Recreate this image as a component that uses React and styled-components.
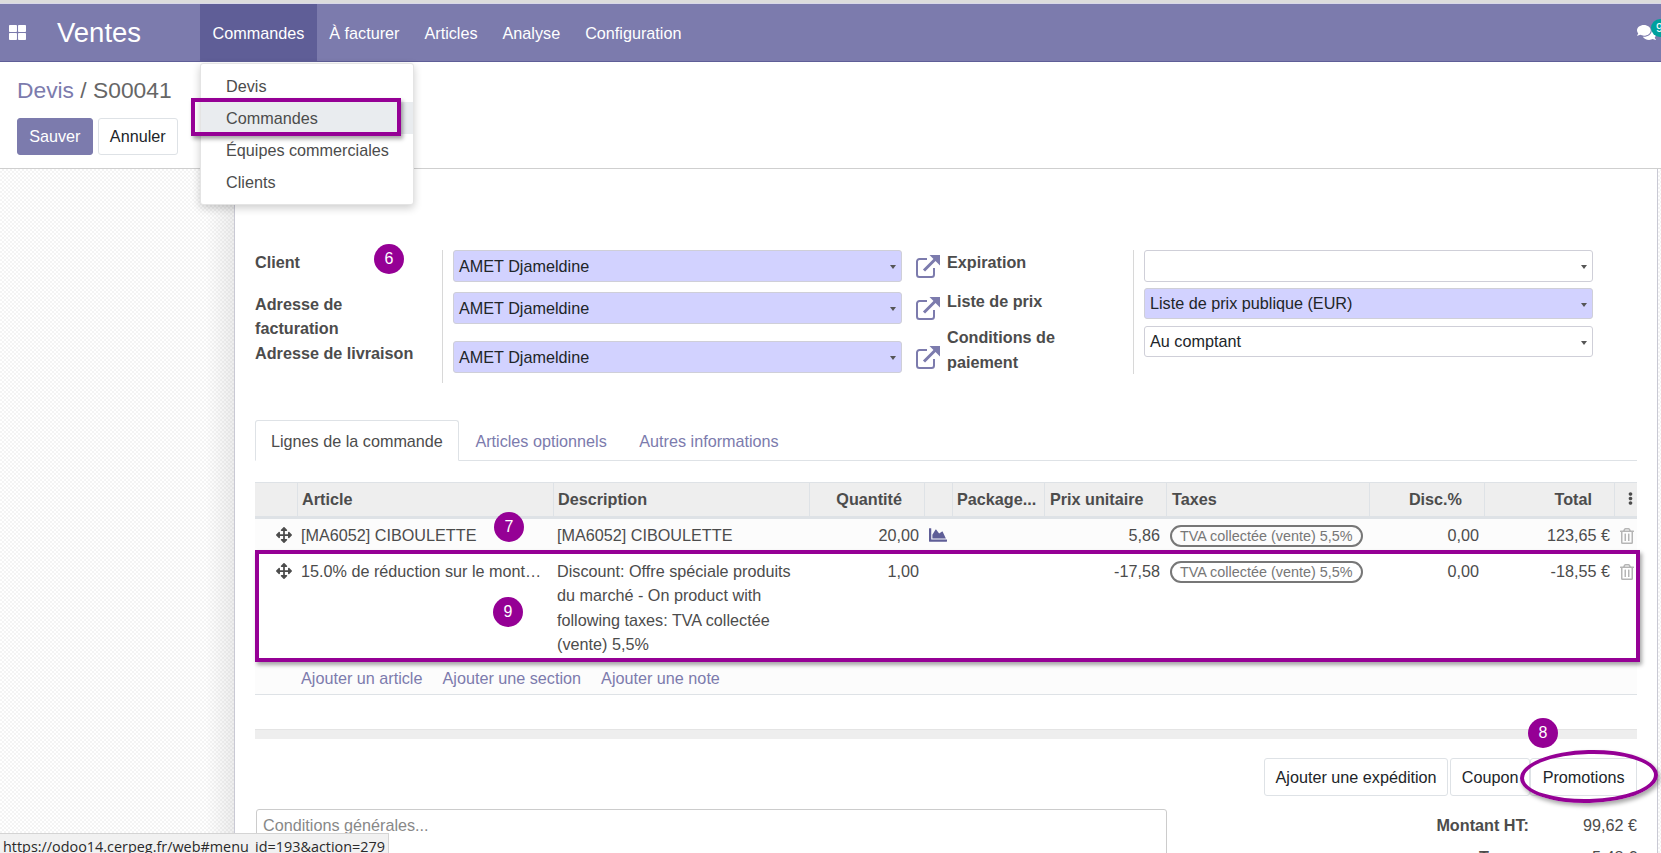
import React from "react";
import styled, { createGlobalStyle } from "styled-components";
import { FaArrowsAlt, FaRegTrashAlt, FaChartArea, FaComments, FaThLarge, FaEllipsisV } from "react-icons/fa";

const Global = createGlobalStyle`
  html, body { margin: 0; padding: 0; height: 853px; overflow: hidden; background: #fff; }
  body { font-family: "Liberation Sans", Arial, sans-serif; font-size: 16.2px; color: #4c4c4c; }
  * { box-sizing: border-box; }
`;

const purple = "#950095";
const primary = "#7c7bad";

const Page = styled.div`
  position: relative;
  width: 1661px;
  height: 853px;
  overflow: hidden;
  display: flex;
  flex-direction: column;
  border-top: 3px solid #dcdcdc;
`;
const NavBar = styled.nav`
  flex: none;
  height: 59px;
  display: flex;
  align-items: stretch;
  background: ${primary};
  border-bottom: 1px solid #5f5e97;
  border-top: 1px solid #d8d8e8;
  color: #fff;
  position: relative;
`;
const AppsButton = styled.div`
  width: 57px;
  display: flex;
  align-items: center;
  padding-left: 9px;
  font-size: 17px;
`;
const Brand = styled.div`
  width: 143px;
  font-size: 27.5px;
  line-height: 57px;
`;
const NavItem = styled.div`
  position: relative;
  padding: 0 12.5px;
  line-height: 58px;
  background: ${(p) => (p.$active ? "#5f5e97" : "transparent")};
  margin-bottom: -1px;
`;
const NavRight = styled.div`
  margin-left: auto;
  position: relative;
  width: 24px;
  display: flex;
  align-items: center;
  font-size: 19px;
`;
const ChatBadge = styled.span`
  position: absolute;
  left: 14px;
  top: 15px;
  width: 18px;
  height: 18px;
  border-radius: 50%;
  background: #00a09d;
  font-size: 12px;
  line-height: 18px;
  padding-left: 5px;
  color: #fff;
`;
const Menu = styled.div`
  position: absolute;
  left: 0;
  top: 59px;
  width: 214px;
  height: 142px;
  padding: 6px 0;
  background: #fff;
  border-radius: 3px;
  border: 1px solid #e4e4e4;
  box-shadow: 0 3px 8px rgba(0, 0, 0, 0.2);
  z-index: 5;
  color: #4c4c4c;
  line-height: 32px;
`;
const MenuItem = styled.div`
  height: 32px;
  line-height: 32px;
  padding-left: 25px;
  background: ${(p) => (p.$hover ? "#e9ecef" : "transparent")};
`;

const ControlPanel = styled.header`
  flex: none;
  height: 107px;
  padding: 12px 17px 0;
  border-bottom: 1px solid #cfcfcf;
`;
const Crumbs = styled.div`
  font-size: 22.8px;
  line-height: 33px;
  color: #666;
`;
const CrumbLink = styled.span`
  color: ${primary};
`;
const ActionRow = styled.div`
  display: flex;
  gap: 5px;
  margin-top: 11px;
`;
const Button = styled.div`
  height: ${(p) => p.$h || 37}px;
  line-height: ${(p) => (p.$h || 37) - 2}px;
  padding: 0 ${(p) => p.$pad || 11.2}px;
  border: 1px solid ${(p) => (p.$primary ? primary : "#dee2e6")};
  border-radius: 3px;
  background: ${(p) => (p.$primary ? primary : "#fff")};
  color: ${(p) => (p.$primary ? "#fff" : "#212529")};
  white-space: nowrap;
`;

const Main = styled.main`
  flex: 1;
  display: flex;
  min-height: 0;
`;
const Backdrop = styled.div`
  flex: none;
  width: ${(p) => p.$w}px;
  background:
    linear-gradient(to ${(p) => p.$dir}, rgba(0, 0, 0, 0) 88%, rgba(0, 0, 0, 0.07)),
    repeating-conic-gradient(#f4f4f4 0 25%, #ffffff 0 50%) 0 0 / 4px 4px;
`;
const Sheet = styled.div`
  flex: none;
  width: 1424px;
  padding: 81px 20px 0 20px;
  background: #fff;
  border-left: 1px solid #c9c9d4;
  border-right: 1px solid #c9c9d4;
`;
const FormArea = styled.div`
  display: flex;
  height: 133px;
`;
const LabelColumn = styled.div`
  flex: none;
  width: ${(p) => p.$w}px;
  height: ${(p) => p.$h}px;
  border-right: 1px solid #d8d8d8;
  margin-right: 10px;
`;
const FieldLabel = styled.div`
  font-weight: 700;
  line-height: 24.6px;
  color: #4c4c4c;
  margin-bottom: ${(p) => p.$after || 0}px;
`;
const FieldColumn = styled.div`
  flex: none;
  display: flex;
  flex-direction: column;
`;
const FieldRow = styled.div`
  display: flex;
  align-items: center;
  gap: 13px;
  margin-top: ${(p) => p.$top || 0}px;
`;
const Select = styled.div`
  position: relative;
  width: 449px;
  height: ${(p) => p.$h || 32}px;
  line-height: ${(p) => (p.$h || 32) - 2}px;
  padding-left: 5px;
  border: 1px solid #cfcfd8;
  border-radius: 3px;
  background: ${(p) => (p.$required ? "#d2d2ff" : "#fff")};
  color: #212529;
  &::after {
    content: "";
    position: absolute;
    right: 5px;
    top: 14px;
    border: 3.5px solid transparent;
    border-top: 4px solid #555;
    border-bottom: 0;
  }
`;
const LinkIcon = styled.svg`
  width: 26px;
  height: 24px;
  flex: none;
  color: ${primary};
`;
const RightGroup = styled.div`
  display: flex;
  margin-left: 6px;
`;

const Tabs = styled.div`
  display: flex;
  height: 41px;
  margin-top: 37px;
  border-bottom: 1px solid #dee2e6;
`;
const Tab = styled.div`
  padding: 0 15.5px 0 15px;
  height: 41px;
  line-height: 41px;
  white-space: nowrap;
  color: ${(p) => (p.$active ? "#4c4c4c" : primary)};
  background: ${(p) => (p.$active ? "#fff" : "transparent")};
  border: 1px solid ${(p) => (p.$active ? "#dee2e6" : "transparent")};
  border-bottom: 1px solid ${(p) => (p.$active ? "#fff" : "transparent")};
  border-radius: 3px 3px 0 0;
`;

const columns = "42px 256px 256px 115px 28px 92px 122px 203px 115px 130px 24px";
const Table = styled.div`
  margin-top: 21px;
  position: relative;
`;
const HeadRow = styled.div`
  display: grid;
  grid-template-columns: ${columns};
  height: 37px;
  background: #eee;
  border-top: 1px solid #dee2e6;
  border-bottom: 3px solid #dee2e6;
`;
const HeadCell = styled.div`
  font-weight: 700;
  line-height: 33px;
  padding: 0 ${(p) => p.$pr ?? 5}px 0 ${(p) => p.$pl ?? 5}px;
  text-align: ${(p) => p.$align || "left"};
  border-left: ${(p) => (p.$first ? "0" : "1px solid #dee2e6")};
  white-space: nowrap;
  overflow: hidden;
`;
const BodyRow = styled.div`
  display: grid;
  grid-template-columns: ${columns};
  height: ${(p) => p.$h}px;
  padding-top: ${(p) => p.$top}px;
  background: ${(p) => (p.$tint ? "#fcfcfc" : "#fff")};
  line-height: 24.6px;
  color: #4c4c4c;
`;
const Cell = styled.div`
  padding: 0 ${(p) => p.$pr ?? 5}px 0 ${(p) => p.$pl ?? 5}px;
  text-align: ${(p) => p.$align || "left"};
  min-width: 0;
  ${(p) => (p.$clip ? "white-space: nowrap; overflow: hidden; text-overflow: ellipsis;" : "")}
`;
const HandleCell = styled.div`
  display: flex;
  justify-content: flex-end;
  padding: 4px 5px 0 0;
  font-size: 16px;
  color: #4c4c4c;
`;
const QtyCell = styled(Cell)`
  overflow: visible;
  white-space: nowrap;
`;
const ChartCell = styled.div`
  padding: 3px 0 0 5px;
  font-size: 18px;
  color: #5f5e97;
  line-height: 18px;
`;
const Tag = styled.span`
  display: inline-block;
  height: 22px;
  line-height: 18px;
  padding: 0 8px;
  border: 2px solid #777;
  border-radius: 11px;
  font-size: 14.4px;
  color: #777;
  white-space: nowrap;
  vertical-align: top;
  margin-top: ${(p) => p.$top || 0}px;
`;
const TrashCell = styled.div`
  padding: 4px 0 0 5px;
  font-size: 16px;
  color: #b5b5b5;
`;
const LinksRow = styled.div`
  display: flex;
  align-items: center;
  gap: 20px;
  height: 33px;
  padding-left: 46px;
  background: #fcfcfc;
  border-bottom: 1px solid #dee2e6;
`;
const TextLink = styled.span`
  color: ${primary};
`;
const Separator = styled.div`
  height: 10px;
  margin-top: 34px;
  background: #eee;
  border-top: 1px solid #e4e4e4;
`;
const ButtonBar = styled.div`
  display: flex;
  justify-content: flex-end;
  gap: 2px;
  margin-top: 19px;
`;
const BarButton = styled(Button)`
  margin-left: ${(p) => p.$ml || 0}px;
`;
const Bottom = styled.div`
  display: flex;
  justify-content: space-between;
  margin-top: 13px;
`;
const NoteBox = styled.div`
  width: 911px;
  height: 90px;
  margin-left: 1px;
  padding: 3px 6px;
  border: 1px solid #ccc;
  border-radius: 3px;
  line-height: 24px;
  color: #888;
`;
const Totals = styled.div`
  display: grid;
  grid-template-columns: auto 108px;
  grid-auto-rows: 32px;
  line-height: 32px;
  text-align: right;
`;
const TotalLabel = styled.div`
  font-weight: 700;
`;

const Annotation = styled.div`
  position: absolute;
  left: ${(p) => p.$x}px;
  top: ${(p) => p.$y}px;
  width: ${(p) => p.$w}px;
  height: ${(p) => p.$h}px;
  border: 4px solid ${purple};
  box-shadow: 2px 3px 4px rgba(0, 0, 0, 0.35);
  pointer-events: none;
  z-index: 6;
`;
const EllipseNote = styled(Annotation)`
  border-radius: 50%;
  background: transparent;
  transform: rotate(-1.5deg);
`;
const Badge = styled.div`
  position: absolute;
  left: ${(p) => p.$x - 15}px;
  top: ${(p) => p.$y - 15}px;
  width: 30px;
  height: 30px;
  border-radius: 50%;
  background: ${purple};
  color: #fff;
  font-size: 16px;
  line-height: 30px;
  text-align: center;
  z-index: 7;
`;
const StatusBar = styled.div`
  position: absolute;
  left: 0;
  top: 830px;
  width: 389px;
  height: 24px;
  padding-left: 3px;
  background: #f1f1f1;
  border: 1px solid #d4d4d4;
  border-left: 0;
  font-family: "Open Sans", "Noto Sans", sans-serif;
  font-size: 14.4px;
  line-height: 26px;
  color: #2a2a2a;
  white-space: nowrap;
  z-index: 8;
`;

const ExternalLink = () => (
  <LinkIcon viewBox="0 0 26 24" fill="none" stroke="currentColor">
    <path d="M12 5H4.500A2.500 2.500 0 0 0 2 7.500v13A2.500 2.500 0 0 0 4.500 23h12a2.500 2.500 0 0 0 2.500-2.500V14" strokeWidth="2" />
    <path d="M9 16.500 21 4.500" strokeWidth="3" />
    <path d="M14.500 1H25v10.500z" fill="currentColor" stroke="none" />
  </LinkIcon>
);

const rows = [
  {
    h: 31, top: 3.6, tint: true, article: "[MA6052] CIBOULETTE",
    desc: "[MA6052] CIBOULETTE", qty: "20,00", chart: true, price: "5,86", total: "123,65 €",
  },
  {
    h: 112, top: 8.6, article: "15.0% de réduction sur le montant total",
    desc: "Discount: Offre spéciale produits du marché - On product with following taxes: TVA collectée (vente) 5,5%",
    qty: "1,00", price: "-17,58", total: "-18,55 €",
  },
];

export default function App() {
  return (
    <Page>
      <Global />
      <NavBar>
        <AppsButton><FaThLarge /></AppsButton>
        <Brand>Ventes</Brand>
        <NavItem $active>
          Commandes
          <Menu>
            <MenuItem>Devis</MenuItem>
            <MenuItem $hover>Commandes</MenuItem>
            <MenuItem>Équipes commerciales</MenuItem>
            <MenuItem>Clients</MenuItem>
          </Menu>
        </NavItem>
        <NavItem>À facturer</NavItem>
        <NavItem>Articles</NavItem>
        <NavItem>Analyse</NavItem>
        <NavItem>Configuration</NavItem>
        <NavRight>
          <FaComments />
          <ChatBadge>9</ChatBadge>
        </NavRight>
      </NavBar>

      <ControlPanel>
        <Crumbs><CrumbLink>Devis</CrumbLink> / S00041</Crumbs>
        <ActionRow>
          <Button $primary>Sauver</Button>
          <Button>Annuler</Button>
        </ActionRow>
      </ControlPanel>

      <Main>
        <Backdrop $w={234} $dir="right" />
        <Sheet>
          <FormArea>
            <LabelColumn $w={188} $h={133}>
              <FieldLabel $after={17}>Client</FieldLabel>
              <FieldLabel>Adresse de<br />facturation</FieldLabel>
              <FieldLabel>Adresse de livraison</FieldLabel>
            </LabelColumn>
            <FieldColumn>
              <FieldRow><Select $required>AMET Djameldine</Select><ExternalLink /></FieldRow>
              <FieldRow $top={10}><Select $required>AMET Djameldine</Select><ExternalLink /></FieldRow>
              <FieldRow $top={17}><Select $required>AMET Djameldine</Select><ExternalLink /></FieldRow>
            </FieldColumn>
            <RightGroup>
              <LabelColumn $w={187} $h={124}>
                <FieldLabel $after={14}>Expiration</FieldLabel>
                <FieldLabel $after={12}>Liste de prix</FieldLabel>
                <FieldLabel>Conditions de<br />paiement</FieldLabel>
              </LabelColumn>
              <FieldColumn>
                <Select />
                <FieldRow $top={6}><Select $required $h={31}>Liste de prix publique (EUR)</Select></FieldRow>
                <FieldRow $top={7}><Select $h={31}>Au comptant</Select></FieldRow>
              </FieldColumn>
            </RightGroup>
          </FormArea>

          <Tabs>
            <Tab $active>Lignes de la commande</Tab>
            <Tab>Articles optionnels</Tab>
            <Tab>Autres informations</Tab>
          </Tabs>

          <Table>
            <HeadRow>
              <HeadCell $first />
              <HeadCell $pl={4}>Article</HeadCell>
              <HeadCell $pl={4}>Description</HeadCell>
              <HeadCell $align="right" $pr={22}>Quantité</HeadCell>
              <HeadCell />
              <HeadCell $pl={4}>Package...</HeadCell>
              <HeadCell>Prix unitaire</HeadCell>
              <HeadCell>Taxes</HeadCell>
              <HeadCell $align="right" $pr={22}>Disc.%</HeadCell>
              <HeadCell $align="right" $pr={22}>Total</HeadCell>
              <HeadCell $pl={9}><FaEllipsisV size={13} /></HeadCell>
            </HeadRow>
            {rows.map((r) => (
              <BodyRow key={r.article} $h={r.h} $top={r.top} $tint={r.tint}>
                <HandleCell><FaArrowsAlt /></HandleCell>
                <Cell $pl={4} $clip>{r.article}</Cell>
                <Cell $pl={4} $pr={10}>{r.desc}</Cell>
                <QtyCell $align="right">{r.qty}</QtyCell>
                <ChartCell>{r.chart && <FaChartArea />}</ChartCell>
                <Cell />
                <Cell $align="right" $pr={6}>{r.price}</Cell>
                <Cell $pl={4} $pr={0}><Tag $top={2}>TVA collectée (vente) 5,5%</Tag></Cell>
                <Cell $align="right">{"0,00"}</Cell>
                <Cell $align="right" $pr={4}>{r.total}</Cell>
                <TrashCell><FaRegTrashAlt /></TrashCell>
              </BodyRow>
            ))}
            <LinksRow>
              <TextLink>Ajouter un article</TextLink>
              <TextLink>Ajouter une section</TextLink>
              <TextLink>Ajouter une note</TextLink>
            </LinksRow>
          </Table>

          <Separator />
          <ButtonBar>
            <BarButton $h={38} $pad={10.6}>Ajouter une expédition</BarButton>
            <BarButton $h={38} $pad={10.6}>Coupon</BarButton>
            <BarButton $h={38} $pad={11.5} $ml={-2}>Promotions</BarButton>
          </ButtonBar>
          <Bottom>
            <NoteBox>Conditions générales...</NoteBox>
            <Totals>
              <TotalLabel>Montant HT:</TotalLabel>
              <div>99,62 €</div>
              <TotalLabel>Taxes:</TotalLabel>
              <div>5,48 €</div>
            </Totals>
          </Bottom>
        </Sheet>
        <Backdrop $w={3} $dir="left" />
      </Main>

      <Annotation $x={191} $y={95} $w={210} $h={38} />
      <Annotation $x={255} $y={547} $w={1385} $h={112} />
      <EllipseNote $x={1520} $y={747} $w={138} $h={53} />
      <Badge $x={389} $y={256}>6</Badge>
      <Badge $x={509} $y={524}>7</Badge>
      <Badge $x={508} $y={609}>9</Badge>
      <Badge $x={1543} $y={730}>8</Badge>
      <StatusBar>https://odoo14.cerpeg.fr/web#menu_id=193&amp;action=279</StatusBar>
    </Page>
  );
}
